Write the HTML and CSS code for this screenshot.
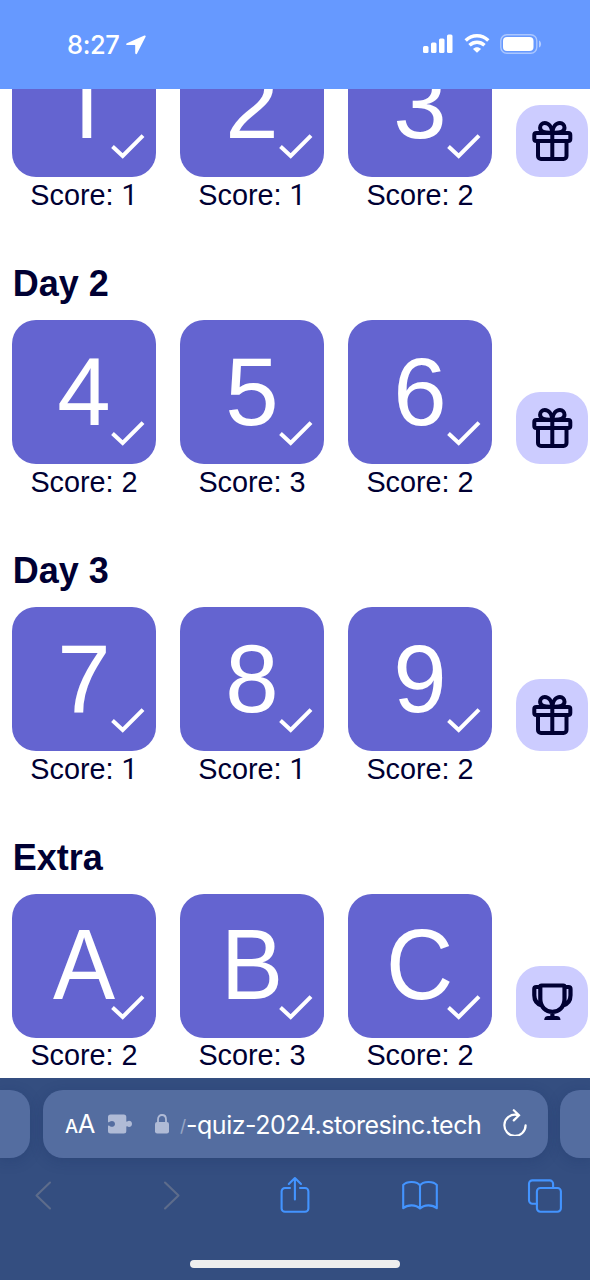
FILE: index.html
```html
<!DOCTYPE html>
<html lang="en">
<head>
<meta charset="utf-8">
<title>Quiz 2024</title>
<link rel="stylesheet" href="styles.css">
</head>
<body>
<svg class="symbols" aria-hidden="true">
  <symbol id="check" viewBox="0 0 36 28"><path d="M2.500 14.500 12.700 24 33 3.700"/></symbol>
  <symbol id="gift" viewBox="0 0 72 72">
    <rect x="18.3" y="28.1" width="36" height="8" rx="2"/>
    <path d="M22 36v15a3 3 0 0 0 3 3h22.5a3 3 0 0 0 3-3V36M36.3 28v26M36.3 27.6c-8 .4-12.2-1-12.2-4.9 0-2.8 2-4.6 4.6-4.6 4.2 0 7.1 4.1 7.6 9.5M36.3 27.6c8 .4 12.2-1 12.2-4.9 0-2.8-2-4.6-4.6-4.6-4.2 0-7.1 4.1-7.6 9.5"/>
  </symbol>
  <symbol id="trophy" viewBox="0 0 72 72">
    <path d="M24.300 20.400c0-.8.500-.9 1.300-.9h21.600c.8 0 1.300.1 1.300.9v12.500c0 8-5.700 13-12.100 13s-12.100-5-12.100-13zM24.300 21h-4a2 2 0 0 0-2 2v6.200c0 5.500 2.300 8.600 7.400 10.200M48.500 21h4a2 2 0 0 1 2 2v6.200c0 5.500-2.300 8.600-7.400 10.200M36.400 46v5"/>
    <path class="solid" d="M28.200 54c0-2.300 1.600-3.900 3.600-3.900h9.100c2 0 3.600 1.600 3.600 3.900z"/>
  </symbol>
</svg>
<header class="status">
  <div class="clock"><span>8:27</span>
    <svg width="20" height="20" viewBox="0 0 20 20"><path d="M18.400.600.9 8.200C-.3 8.800-.1 10 1.300 10h7.400c.3 0 .5.200.5.500v7.300c0 1.700 1.400 1.900 2 .500L19.600 1.800c.4-.9-.3-1.600-1.200-1.200z"/></svg>
  </div>
  <div class="signals">
    <svg width="30" height="20" viewBox="0 0 30 20"><rect y="12" width="5.5" height="7" rx="1.5"/><rect x="8" y="8.5" width="5.5" height="10.5" rx="1.5"/><rect x="16" y="4.5" width="5.5" height="14.5" rx="1.5"/><rect x="24" y=".5" width="5.5" height="18.5" rx="1.5"/></svg>
    <svg width="26" height="20" viewBox="0 0 26 20"><g class="waves"><path d="M1.700 6.500c6.600-6.200 16-6.200 22.600 0M5.500 11.300c4.400-4 10.600-4 15 0"/></g><path d="M13 18.800 9 15c2.200-2.200 5.800-2.200 8 0z"/></svg>
    <svg width="42" height="20" viewBox="0 0 42 20"><rect class="shell" x=".8" y=".7" width="36" height="18.600" rx="6"/><rect x="3" y="3" width="30.500" height="14" rx="4"/><path class="cap" d="M39 6.500c2.800 1 2.800 6 0 7z"/></svg>
  </div>
</header>
<main class="page">
  <section class="day scrolled">
    <div class="row">
      <div class="quiz"><div class="tile"><span class="one">1</span><svg><use href="#check"/></svg></div><p>Score: <span class="one">1</span></p></div>
      <div class="quiz"><div class="tile">2<svg><use href="#check"/></svg></div><p>Score: <span class="one">1</span></p></div>
      <div class="quiz"><div class="tile">3<svg><use href="#check"/></svg></div><p>Score: 2</p></div>
      <div class="prize"><svg><use href="#gift"/></svg></div>
    </div>
  </section>
  <section class="day">
    <h2>Day 2</h2>
    <div class="row">
      <div class="quiz"><div class="tile">4<svg><use href="#check"/></svg></div><p>Score: 2</p></div>
      <div class="quiz"><div class="tile">5<svg><use href="#check"/></svg></div><p>Score: 3</p></div>
      <div class="quiz"><div class="tile">6<svg><use href="#check"/></svg></div><p>Score: 2</p></div>
      <div class="prize"><svg><use href="#gift"/></svg></div>
    </div>
  </section>
  <section class="day">
    <h2>Day 3</h2>
    <div class="row">
      <div class="quiz"><div class="tile">7<svg><use href="#check"/></svg></div><p>Score: <span class="one">1</span></p></div>
      <div class="quiz"><div class="tile">8<svg><use href="#check"/></svg></div><p>Score: <span class="one">1</span></p></div>
      <div class="quiz"><div class="tile">9<svg><use href="#check"/></svg></div><p>Score: 2</p></div>
      <div class="prize"><svg><use href="#gift"/></svg></div>
    </div>
  </section>
  <section class="day">
    <h2>Extra</h2>
    <div class="row">
      <div class="quiz"><div class="tile"><span class="letter">A</span><svg><use href="#check"/></svg></div><p>Score: 2</p></div>
      <div class="quiz"><div class="tile"><span class="letter">B</span><svg><use href="#check"/></svg></div><p>Score: 3</p></div>
      <div class="quiz"><div class="tile"><span class="letter">C</span><svg><use href="#check"/></svg></div><p>Score: 2</p></div>
      <div class="prize trophy"><svg><use href="#trophy"/></svg></div>
    </div>
  </section>
</main>
<footer class="browser">
  <div class="tabs">
    <div class="tab previous"></div>
    <div class="tab address">
      <span class="text-size"><small>A</small>A</span>
      <svg class="puzzle" width="24" height="20" viewBox="0 0 24 20"><path d="M2.500.500h13.300a2.500 2.500 0 0 1 2.500 2.500v4.200c0 .5.500.700.9.300 1.900-1.500 4.800-.2 4.800 2.400s-2.900 3.900-4.800 2.400c-.4-.3-.9-.1-.9.400V17a2.500 2.500 0 0 1-2.500 2.500H2.500A2.500 2.500 0 0 1 0 17v-4.900c0-.5.500-.8 1-.5l1 .6c2 1.400 5 .2 5-2.300s-3-3.700-5-2.300l-1 .6c-.5.300-1 0-1-.5V3A2.500 2.500 0 0 1 2.500.500z"/></svg>
      <svg class="lock" width="14" height="20" viewBox="0 0 14 20"><rect y="8" width="14" height="11.500" rx="2.200"/><path d="M3 9V5.400C3 2.500 4.700 1 7 1s4 1.500 4 4.400V9"/></svg>
      <span class="faded">/</span><span class="url">-quiz-2024.storesinc.tech</span>
      <svg class="reload" width="24" height="28" viewBox="0 0 24 28"><path d="M13.500 6.800A10.600 10.600 0 1 0 22.600 17.300M10.800 2.200 16 7.200 10.800 12.400"/></svg>
    </div>
    <div class="tab next"></div>
  </div>
  <nav class="tools">
    <svg class="off" viewBox="0 0 36 36"><path d="M24 5.500 10.500 18.500 24 31.500"/></svg>
    <svg class="off" viewBox="0 0 36 36"><path d="M14 5.500 27.500 18.500 14 31.500"/></svg>
    <svg viewBox="0 0 36 36"><path d="M14 11H9a3.400 3.400 0 0 0-3.400 3.400v17A3.400 3.400 0 0 0 9 34.800h20a3.400 3.400 0 0 0 3.400-3.400v-17A3.400 3.400 0 0 0 29 11h-5M18.900 22.500V1M12.800 7l6.100-6 6.100 6"/></svg>
    <svg viewBox="0 0 36 36"><path d="M18 8.500C15 3.900 4.700 3.800 1.200 8v23.200c4.300-3.800 12.800-3.800 16.800.4 4-4.200 12.500-4.200 16.800-.4V8c-3.500-4.200-13.800-4.100-16.800.5zM18 8.500v23"/></svg>
    <svg viewBox="0 0 36 36"><rect x="9.900" y="11" width="24" height="23.700" rx="3.500"/><path d="M9.900 26.700H5.500A3.400 3.400 0 0 1 2 23.300V6.800a3.400 3.400 0 0 1 3.500-3.400h17.200A3.400 3.400 0 0 1 26.100 6.800V11"/></svg>
  </nav>
  <div class="home"></div>
</footer>
</body>
</html>
```
FILE: styles.css
```css
* { box-sizing: border-box; }
body {
  margin: 0;
  width: 590px;
  height: 1280px;
  overflow: hidden;
  display: flex;
  flex-direction: column;
  background: #fff;
  color: #003;
  font-family: "Liberation Sans", Arial, sans-serif;
}
svg { display: block; flex: none; }
.symbols { display: none; }

.status {
  height: 88.7px;
  flex: none;
  display: flex;
  justify-content: space-between;
  align-items: center;
  padding: 0 48px 0 67px;
  background: #6699ff;
  color: #fff;
  fill: #fff;
}
.clock {
  display: flex;
  align-items: center;
  gap: 6.5px;
  padding-top: 1px;
  font: 500 25.5px/30px Inter, sans-serif;
  letter-spacing: -.4px;
}
.signals { display: flex; gap: 11px; }
.signals svg:last-child { margin-left: -1px; }
.waves { fill: none; stroke: #fff; stroke-width: 3.5; }
.shell { fill: none; stroke: #fff; stroke-width: 1.4; opacity: .45; }
.cap { opacity: .5; }

.page { flex: 1; min-height: 0; overflow: hidden; }
.day { height: 286.8px; }
.scrolled { height: 229.6px; margin-top: -55.4px; }
.day h2 {
  margin: 0 0 15.5px;
  padding: .5px 0 0 12.8px;
  height: 42px;
  font-size: 36px;
  line-height: 42px;
}
.row { display: flex; gap: 24px; padding-left: 12px; }
.quiz { width: 144px; flex: none; text-align: center; }
.one { font-family: Roboto, sans-serif; line-height: 1; }
.letter { display: inline-block; transform: scale(.97, 1.04); transform-origin: 50% 73%; }
.tile {
  position: relative;
  height: 144px;
  border-radius: 24px;
  background: #6464d0;
  color: #fff;
  font-size: 96px;
  line-height: 144px;
}
.tile svg {
  position: absolute;
  right: 10px;
  bottom: 17px;
  width: 36px;
  height: 28px;
  fill: none;
  stroke: #fff;
  stroke-width: 4;
}
.quiz p { margin: 0; height: 34px; padding-top: .4px; font-size: 28.8px; line-height: 34px; }
.scrolled p { padding-top: .7px; }
.prize {
  width: 72px;
  height: 72px;
  margin-top: 72px;
  flex: none;
  border-radius: 24px;
  background: #ccf;
}
.prize svg {
  width: 72px;
  height: 72px;
  fill: none;
  stroke: #003;
  stroke-width: 4;
  stroke-linejoin: round;
}
.trophy svg { stroke-width: 4.2; }
.solid { fill: #003; stroke: none; }

.browser {
  height: 202px;
  flex: none;
  padding-top: 12px;
  background: #344e80;
}
.tabs { display: flex; gap: 12.5px; }
.tab {
  height: 68px;
  flex: none;
  border-radius: 20px;
  background: #546da0;
  box-shadow: 0 3px 14px rgba(20, 40, 90, .22);
}
.previous { width: 30px; border-radius: 0 20px 20px 0; }
.next { flex: 1; border-radius: 20px 0 0 20px; }
.address {
  width: 505px;
  display: flex;
  align-items: center;
  padding-left: 22.5px;
  color: #fff;
  font: 25px/30px Inter, sans-serif;
}
.text-size { width: 43px; padding-top: 1px; font-size: 25.5px; letter-spacing: -.5px; white-space: nowrap; }
.text-size small { font-size: 18.5px; font-weight: 500; }
.puzzle, .lock { fill: #b0bbd6; }
.lock { margin: 0 11px 0 23px; }
.lock path { fill: none; stroke: #b0bbd6; stroke-width: 1.8; }
.faded { width: 6px; padding-top: 4px; flex: none; font-size: 17px; opacity: .4; }
.url { width: 300px; flex: none; padding-top: 1px; letter-spacing: -.48px; white-space: nowrap; }
.reload { margin: -4px 0 0 16.5px; fill: none; stroke: #fff; stroke-width: 2.2; stroke-linecap: round; }
.tools {
  display: flex;
  justify-content: space-between;
  padding: 19px 27px 0 25.5px;
}
.tools svg {
  width: 36px;
  height: 36px;
  overflow: visible;
  fill: none;
  stroke: #4394ff;
  stroke-width: 2.1;
  stroke-linecap: round;
  stroke-linejoin: round;
}
.tools .off { stroke: #5d6c8b; }
.home {
  width: 210px;
  height: 8px;
  margin: 47px auto 0;
  border-radius: 4px;
  background: #eee;
}
```
